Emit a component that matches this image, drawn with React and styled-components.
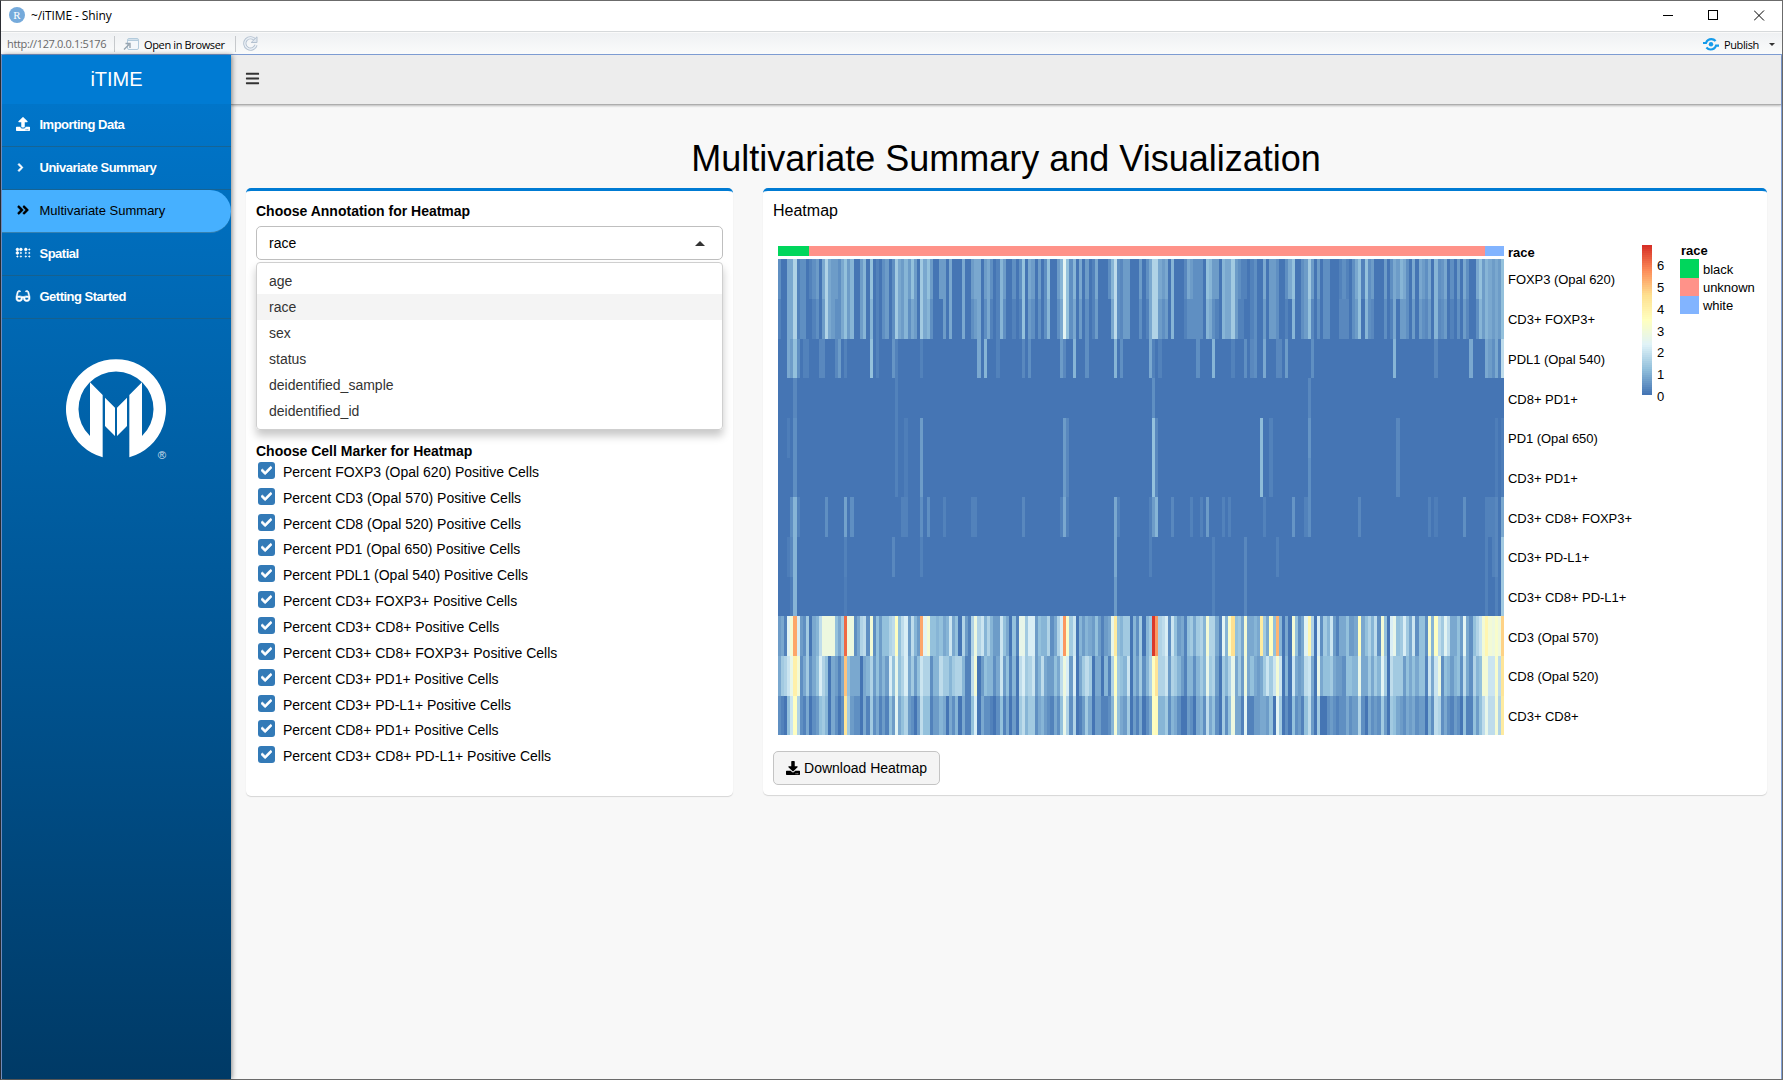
import React from "react";
import styled, { createGlobalStyle } from "styled-components";
import {
  FaUpload,
  FaChevronRight,
  FaAngleDoubleRight,
  FaBraille,
  FaGlasses,
  FaBars,
  FaDownload,
  FaCheck,
} from "react-icons/fa";

const GlobalStyle = createGlobalStyle`
  *, *::before, *::after { box-sizing: border-box; }
  body {
    margin: 0;
    font-family: "Liberation Sans", Arial, sans-serif;
    font-size: 14px;
    color: #000;
    overflow: hidden;
  }
`;

const uiFont = `"Open Sans", "Noto Sans", sans-serif`;

const Window = styled.div`
  width: 1783px;
  height: 1080px;
  display: flex;
  flex-direction: column;
  background: #f8f8f8;
  border: 1px solid #6b6b6b;
  border-left-color: #2b2d33;
`;

const TitleBar = styled.header`
  height: 31px;
  flex: none;
  display: flex;
  align-items: center;
  background: #fff;
  border-bottom: 1px solid #d6d9db;
  padding: 0 0 2px 8px;
  font: 12px ${uiFont};
`;

const RBadge = styled.span`
  width: 16px;
  height: 16px;
  border-radius: 50%;
  background: #75aadb;
  color: #fff;
  font: 11px/16px "Liberation Serif", serif;
  text-align: center;
  margin-right: 6px;
`;

const WindowName = styled.span`
  letter-spacing: -0.1px;
`;

const WindowControls = styled.div`
  margin-left: auto;
  display: flex;
  gap: 35px;
  padding-right: 17px;
`;

const Toolbar = styled.div`
  height: 23px;
  flex: none;
  display: flex;
  align-items: center;
  background: linear-gradient(#eff1f3, #fafbfb);
  border-top: 1px solid #fafafa;
  border-bottom: 1px solid #7f9fd6;
  padding: 0 7px 0 6px;
  font: 11px ${uiFont};
`;

const Address = styled.span`
  width: 100px;
  white-space: nowrap;
  color: #686868;
  letter-spacing: -0.36px;
`;

const Divider = styled.i`
  width: 1px;
  height: 16px;
  margin: 0 7px;
  background: #c6c9cc;
`;

const ToolButton = styled.span`
  display: flex;
  align-items: center;
  gap: 5px;
  padding: 1px 2px 0 1px;
  white-space: nowrap;
  letter-spacing: -0.36px;
  margin-left: ${(p) => (p.$right ? "auto" : 0)};
  padding-right: ${(p) => (p.$right ? 0 : 3)}px;
`;

const Caret = styled.i`
  border: ${(p) => p.$size || 3}px solid transparent;
  border-${(p) => (p.$up ? "bottom" : "top")}: ${(p) => p.$size || 3}px solid #333;
  border-${(p) => (p.$up ? "top" : "bottom")}: 0;
  margin-left: ${(p) => p.$gap || 0}px;
`;

const Frame = styled.div`
  flex: 1;
  min-height: 0;
  display: flex;
  border-left: 1px solid #7f9fd6;
  border-right: 1px solid #7f9fd6;
`;

const Sidebar = styled.aside`
  width: 229px;
  flex: none;
  position: relative;
  z-index: 1;
  display: flex;
  flex-direction: column;
  background: linear-gradient(#007bd3 0, #0075c9 49px, #003a66 100%);
  box-shadow: 1px 0 5px rgba(0, 0, 0, 0.45);
`;

const Brand = styled.div`
  height: 49px;
  background: #007bd3;
  color: #fff;
  font-size: 20px;
  line-height: 48px;
  text-align: center;
`;

const NavItem = styled.a`
  height: 43px;
  display: flex;
  align-items: center;
  padding: 0 0 2px 13.5px;
  font-size: 13px;
  font-weight: ${(p) => (p.$active ? 400 : 700)};
  letter-spacing: ${(p) => (p.$active ? 0 : -0.5)}px;
  color: ${(p) => (p.$active ? "#000" : "#fff")};
  background: ${(p) => (p.$active ? "#46b0ff" : "transparent")};
  border-radius: ${(p) => (p.$active ? "0 21px 21px 0" : "0")};
  border-bottom: 1px solid rgba(40, 90, 110, 0.55);
`;

const NavIcon = styled.span`
  width: 24px;
  display: flex;
  svg {
    height: ${(p) => p.$size || 14}px;
    width: auto;
    overflow: visible;
    stroke: currentColor;
    stroke-width: ${(p) => p.$weight || 0}px;
  }
`;

const LogoBox = styled.div`
  display: flex;
  padding: 40px 0 0 64px;
`;

const Content = styled.main`
  flex: 1;
  min-width: 0;
  display: flex;
  flex-direction: column;
`;

const NavBar = styled.div`
  height: 50px;
  background: #ededed;
  border-bottom: 1px solid #adadad;
  box-shadow: 0 1px 2px rgba(0, 0, 0, 0.25);
  padding: 16px 14px;
  color: #333;
`;

const PageTitle = styled.h1`
  margin: 33px 0 9px;
  font-size: 36px;
  line-height: 41px;
  font-weight: 400;
  text-align: center;
`;

const Columns = styled.div`
  display: flex;
  align-items: flex-start;
  gap: 30px;
  padding: 0 14px 0 15px;
`;

const Card = styled.section`
  width: ${(p) => p.$width}px;
  height: ${(p) => p.$height}px;
  background: #fff;
  border-top: 3px solid #007bd3;
  border-radius: 5px;
  box-shadow: 0 1px 1px rgba(0, 0, 0, 0.14);
  padding: 10px;
`;

const FieldLabel = styled.div`
  font-weight: 700;
  line-height: ${(p) => p.$line || 20}px;
`;

const SelectBox = styled.div`
  height: 34px;
  margin-top: 5px;
  display: flex;
  align-items: center;
  justify-content: space-between;
  border: 1px solid #bfbfbf;
  border-radius: 5px;
  padding: 0 17px 0 12px;
`;

const Menu = styled.ul`
  list-style: none;
  margin: 2px 0 0;
  padding: 5px 0;
  height: 168px;
  border: 1px solid #cfcfcf;
  border-radius: 4px;
  box-shadow: 0 6px 9px rgba(0, 0, 0, 0.22);
`;

const MenuItem = styled.li`
  height: 26px;
  line-height: 27px;
  padding-left: 12px;
  color: #333;
  background: ${(p) => (p.$selected ? "#f4f4f4" : "transparent")};
`;

const MarkerGroup = styled.div`
  margin-top: 13px;
`;

const Marker = styled.label`
  display: flex;
  align-items: center;
  gap: 8px;
  height: 25.85px;
  padding-left: 2px;
`;

const Tick = styled.span`
  width: 17px;
  height: 17px;
  margin-top: -3px;
  border-radius: 3px;
  background: #337ab7;
  display: flex;
  align-items: center;
  justify-content: center;
  svg {
    stroke: #fff;
    stroke-width: 30px;
  }
`;

const CardTitle = styled.h2`
  margin: 0;
  font-size: 16px;
  line-height: 19px;
  font-weight: 400;
`;

const DownloadButton = styled.button`
  width: 167px;
  height: 34px;
  margin-top: 11px;
  display: flex;
  align-items: center;
  justify-content: center;
  gap: 4px;
  border: 1px solid #c4c4c4;
  border-radius: 5px;
  background: #f4f4f4;
  font: 14px "Liberation Sans", Arial, sans-serif;
  color: #000;
  padding: 0;
  white-space: nowrap;
`;

const Plot = styled.svg`
  display: block;
  margin-top: 15px;
`;

const PALETTE = [
  [69, 117, 180],
  [145, 191, 219],
  [224, 243, 248],
  [255, 255, 191],
  [254, 224, 144],
  [252, 141, 89],
  [215, 48, 39],
];

/* Levels run from 0 to 34.5, five per unit of the legend. */
const levelColor = (level) => {
  const t = Math.min(level / 5.75, 5.9999);
  const i = Math.floor(t);
  const mix = PALETTE[i].map((c, k) => Math.round(c + (PALETTE[i + 1][k] - c) * (t - i)));
  return `rgb(${mix.join(",")})`;
};

/* Each block is an origin followed by "start level" runs, in thirds of a pixel. */
const HEAT_ROWS = [
  {
    label: "FOXP3 (Opal 620)",
    runs: [
      [-24, "24 2 33 0 51 4 69 8 81 1 90 2 108 0 117 1 126 2 138 3 147 0 156 4 165 8 174 4 183 3 204 2 213 4 222 6 231 3 240 5 252 0 270 3 279 5 288 0 300 6 309 0 318 1 327 0 336 2 345 3 357 0 366 2 375 7 384 4 393 3 402 5 414 3 423 6 432 3 441 0 450 7 459 4 471 6 480 3 489 0 507 3 528 0 537 4 546 0 576 4 585 0 603 3 612 4 633 0 642 3 651 4 660 2 669 0 678 1 690 5 699 3 708 0"],
      [696, "6 2 18 0 27 2 36 6 45 0 54 4 63 3 75 0 84 3 93 0 102 2 111 6 120 0 141 3 150 5 159 12 168 6 177 2 189 5 198 0 207 4 216 0 225 3 237 0 246 1 255 4 264 0 294 2 303 5 312 9 321 2 330 1.5 339 3 360 0 387 3 396 0 408 2 417 4 426 8 444 4 456 3 465 4 474 0 483 5 492 0 522 1.5 531 4 540 3 549 2 579 0 588 6 597 5 606 3 627 0 636 5 645 4 663 7 675 3 684 2 693 1 711 0 720 1 732 2"],
      [1431, "6 0 24 4 33 0 42 3 63 2 72 0 90 2 99 4 111 6 120 0 138 2 147 3 159 7 168 3 177 0 186 3 195 0 204 2 225 0 252 1 261 2 273 1 282 0 291 2 300 4 309 6 318 1 330 6 339 2 348 3 357 0 387 3 396 0 405 2 414 4 423 3 435 5 444 4 453 2 462 0 471 4 480 0 492 4 501 3 510 2 519 4 528 0 537 5 549 2 558 2.5 567 4 576 0 585 2 597 0 606 3 615 0 624 4 633 2 642 0 663 4 672 6 681 3 690 5 699 4 711 3 720 4 729 3 738 6"],
    ],
  },
  {
    label: "CD3+ FOXP3+",
    runs: [
      [-24, "24 1 33 0 51 4 69 8 81 1 90 2 108 0 126 1 138 2 147 0 156 3 165 8 174 4 183 3 195 2 213 4 222 6 231 3 240 5 252 0 270 3 279 5 288 0 300 5 309 0 318 1 327 0 336 2 345 3 357 0 366 2 375 7 384 4 393 3 402 5 414 2 423 4 432 3 441 0 450 7 459 4 471 5 480 2 489 0 519 3 528 0 537 4 546 0 576 4 585 0 603 2 612 3 621 4 633 0 642 2 651 4 660 1 669 0 678 1 690 5 699 2 708 0 726 1 738 0 747 3"],
      [696, "6 1 18 0 27 1 36 6 45 0 54 3 63 2 75 0 84 2 93 0 102 2 111 5 120 0 141 2 150 4 159 12 168 6 177 2 189 4 198 0 207 3 216 0 225 2 237 0 246 1 255 3 264 0 303 4 312 9 321 2 330 1.5 339 3 360 0 387 2 396 0 408 1 417 4 426 8 444 3 456 2 465 3 474 0 483 5 492 0 522 1 531 2 579 0 588 5 597 4 606 2 615 1 627 0 636 5 645 4 663 7 675 3 684 1 702 0 720 1 732 2"],
      [1431, "6 0 24 3 33 0 42 3 63 2 72 0 90 1 99 0 111 5 120 0 138 2 147 3 159 6 168 1.5 177 0 186 2 195 0 204 2 225 0 252 1.5 282 0 291 2 300 3 309 6 318 0 330 5 339 2 348 1.5 357 0 387 2 396 0 405 1 414 4 423 0 435 3 453 2 462 0 471 3 480 0 492 3 501 2 510 1.5 519 3 528 0 537 5 549 1.5 558 2 567 3 576 0 585 1 597 0 606 2 615 0 624 3 633 1.5 642 0 663 2 672 5 681 3 690 5 699 4 711 3 720 4 729 3 738 6"],
    ],
  },
  {
    label: "PDL1 (Opal 540)",
    runs: [
      [-24, "24 0 51 4 60 3 69 6 81 2 90 0 99 1 117 0 147 1.5 165 0 195 1.5 204 3 213 0 222 1 231 0 300 6 309 0 318 1 327 0 366 2.5 375 1 384 0 450 1 459 0 621 4 633 0 642 5 651 0 678 1 690 0"],
      [696, "36 1.5 45 0 54 2 63 0 150 3 159 1.5 168 0 189 5 198 0 225 2 237 0 312 5 321 0 330 2 339 0 417 4 426 1 435 0 444 1 456 0 558 2 570 0 606 5 615 0 663 1 675 0 702 2 711 0 720 1.5 732 2 741 0"],
      [1431, "24 4 33 0 63 1.5 81 0 90 3 99 0 168 2 177 0 414 5 423 0 537 1.5 549 0 642 4 654 0 690 4 699 3 711 2 720 4 729 1 738 9"],
    ],
  },
  {
    label: "CD8+ PD1+",
    runs: [[-24, "24 0 69 1.5 81 0 375 1 384 0"], [696, "426 2 435 0"], [1431, "159 1.5 168 0"]],
  },
  {
    label: "PD1 (Opal 650)",
    runs: [
      [-24, "24 0 51 .7 60 0 69 2 81 0 375 1 384 0 402 .7 414 0 450 3 459 0"],
      [696, "159 3 168 1.5 177 0 426 6 435 1.5 444 0"],
      [1431, "15 5.5 24 0 42 1 54 0 159 2.5 168 0 423 1.5 435 0 720 .7 729 0 738 .7"],
    ],
  },
  {
    label: "CD3+ PD1+",
    runs: [
      [-24, "24 0 69 2 81 0 375 1 384 0 402 .7 414 0 450 3 459 0"],
      [696, "159 3 168 1.5 177 0 426 6 435 1.5 444 0"],
      [1431, "15 5.5 24 0 42 1 54 0 159 2 168 0 423 1.5 435 0 720 .7 729 0 738 .7"],
    ],
  },
  {
    label: "CD3+ CD8+ FOXP3+",
    runs: [
      [-24, "24 0 60 2 69 5 81 1 90 0 165 2 174 0 222 3.5 231 0 240 2 252 0 393 1 414 0 450 2 459 0 471 2 480 0 519 1 528 0 603 1 621 0 756 1.5 765 0 870 1 879 4 888 1 897 0 1032 4 1041 1 1050 0"],
      [1086, "27 1 36 3 45 5 54 0 93 1.5 102 0 150 1 159 0 180 1 189 0 198 3 207 0 246 1 255 0 264 1 273 0 369 1 378 0 456 2.5 465 0 492 1 504 2 513 0 654 1.5 663 0 864 1 873 0 882 .7 894 0 969 2 978 0 1035 1 1065 1.5 1074 0 1083 4"],
    ],
  },
  {
    label: "CD3+ PD-L1+",
    runs: [
      [-24, "24 0 51 .7 60 1.5 69 5 81 0 222 1 231 0 366 1.5 375 0 450 1 459 0 1032 4 1041 0"],
      [1086, "27 1 36 0 216 1 225 0 312 1.5 321 0 408 1 417 0 1035 1 1044 0 1056 1 1065 1.5 1074 0 1083 7"],
    ],
  },
  {
    label: "CD3+ CD8+ PD-L1+",
    runs: [
      [-24, "24 0 60 .7 69 5 81 0 222 .7 231 0 1032 3 1041 0"],
      [1086, "216 1 225 0 312 1.5 321 0 1035 1 1044 0 1065 1 1074 0 1083 7"],
    ],
  },
  {
    label: "CD3 (Opal 570)",
    runs: [
      [-24, "24 3 33 4 42 1 51 12 60 15 69 27 81 11 90 3 99 2 108 7 117 0 126 4 138 5 147 9 156 14 183 14 195 6 204 4 213 7 222 31 231 14 252 2 261 4 270 8 279 9 288 2 300 15 309 2 318 6 327 3 336 6 357 8 366 9 375 17 384 6 393 9 402 11 414 3 423 9 432 5 441 3 450 27 459 12 471 15 480 6 498 5 507 6 519 4 528 5 537 10 546 4 555 6 564 0 576 8 585 3 594 1 603 8 612 14 621 8 633 10 642 5 651 8 660 5 669 3 690 10 699 6 708 4 717 0 726 6 738 1 747 13 765 7 774 11 795 3 804 6 813 5 831 8 840 2 852 4 861 8 870 11 879 28 888 16 897 7 909 10 918 0 927 5 936 3 945 5 954 4 966 3 975 6 984 3 993 1 1002 3 1014 4 1023 13 1032 21 1041 6 1050 5 1059 7 1071 7 1080 0 1089 5 1098 2 1107 7"],
      [1086, "6 0 18 5 27 7 36 34 45 28 54 8 66 9 75 11 84 2 93 10 102 6 111 3 123 4 132 1 141 6 150 7 159 4 168 7 180 8 189 5 198 15 207 8 225 4 237 1 246 12 255 5 264 16 273 23 285 6 294 7 303 4 312 15 321 4 333 4 342 5 351 4 360 21 369 7 378 4 387 17 399 6 408 26 417 5 426 0 435 4 444 0 456 15 465 6 474 2 483 4 492 12 504 19 513 8 522 0 531 11 540 2 549 7 561 5 570 10 579 3 588 1 597 4 618 6 627 3 642 4 654 17 663 4 675 6 684 8 693 5 702 9 711 2 723 15 732 6 741 0 750 11 759 13 768 6 780 7 789 11 798 7 807 4 816 10 825 2 837 6 855 2 864 16 873 5 882 17 894 9 903 7 912 12 921 9 930 4 951 6 960 3 969 12 978 4 987 2 999 6 1008 8 1017 10 1026 15 1035 19 1044 15 1056 14 1065 16 1074 14 1083 24"],
    ],
  },
  {
    label: "CD8 (Opal 520)",
    runs: [
      [-24, "24 4 33 7 42 8 51 10 60 13 69 20 81 15 90 2 99 4 108 7 117 2 126 4 138 6 147 11 156 8 165 6 174 0 183 4 195 3 204 1 213 4 222 25 231 6 240 4 252 4 270 0 279 4 288 5 300 8 309 3 318 6 327 3 336 5 345 3 357 11 366 6 375 13 384 6 393 8 402 11 414 4 423 7 432 3 441 6 450 10 459 8 480 2 489 5 507 9 519 7 537 5 546 7 555 8 576 5 585 1 603 9 612 15 621 0 633 3 642 6 651 5 660 5 669 2 678 4 690 10 699 3 708 6 717 1 726 5 738 0 747 9 756 11 765 7 774 8 786 10 795 3 804 5 813 9 822 4 831 3 852 6 861 4 870 9 879 14 888 11 897 3 909 11 918 0 927 4 936 7 945 9 957 7 966 0 975 4 993 0 1002 5 1014 1 1023 8 1032 17 1041 7 1050 6 1059 5 1071 10 1080 0 1089 5 1098 3 1107 7"],
      [1086, "6 2 18 5 27 8 36 17 45 22 54 8 66 8 75 10 84 3 93 8 102 7 111 5 123 3 132 1 141 5 159 2 168 5 180 7 189 5 198 13 207 7 216 8 225 3 237 0 246 7 255 5 264 8 273 13 285 4 294 7 303 3 312 14 321 4 330 6 342 4 351 3 360 4 369 7 378 10 387 7 399 10 408 15 417 10 426 0 435 5 444 0 456 10 465 4 474 3 483 4 492 9 504 10 513 4 522 0 531 13 540 4 549 6 570 7 579 4 588 3 597 3 606 2 618 6 627 6 636 5 654 13 663 4 684 7 693 4 702 7 711 5 723 12 732 7 741 0 750 9 759 7 768 7 789 3 798 6 807 4 816 6 825 4 837 6 855 1 864 10 873 4 882 10 894 14 903 2 912 6 921 5 930 3 942 5 951 6 960 2 969 9 978 4 987 2 999 8 1008 5 1017 6 1026 15 1044 10 1065 16 1074 9 1083 22"],
    ],
  },
  {
    label: "CD3+ CD8+",
    runs: [
      [-24, "24 2 33 1 42 0 51 6 60 10 69 17 81 8 90 2 99 1 108 4 117 0 126 2 138 3 147 6 156 7 165 5 174 0 183 4 195 2 204 0 213 2 222 22 231 7 240 3 252 2 270 0 279 4 288 1 300 7 309 2 318 4 327 1 336 3 345 1 357 6 366 3 375 12 384 4 393 6 402 8 414 3 423 2 432 0 441 3 450 9 459 6 480 1 489 3 507 5 519 4 528 0 537 4 546 2 555 5 564 0 576 4 585 1 603 6 612 11 621 0 633 4 642 2 651 2 660 1 669 0 678 2 690 6 699 1 708 4 717 0 726 3 738 0 747 7 756 9 765 5 774 7 795 2 804 4 813 5 822 3 831 2 840 1 852 4 861 2 870 6 879 13 888 8 897 2 909 8 918 0 927 1 936 3 945 7 954 4 966 0 975 3 993 1 1014 2 1023 5 1032 15 1041 6 1050 4 1059 3 1071 7 1080 0 1089 3 1098 1 1107 4"],
      [1086, "6 0 18 2 27 4 36 17 45 18 54 5 75 7 84 2 93 5 102 4 111 2 123 0 141 3 150 2 159 0 168 4 180 5 189 2 198 9 207 4 216 6 225 2 237 0 246 7 255 2 264 6 273 14 285 4 303 1 312 12 321 1 342 3 360 4 378 3 387 6 399 0 408 12 417 7 426 0 435 2 444 0 456 6 465 2 474 3 483 1 492 6 504 9 513 3 522 0 531 7 540 0 561 2 570 3 579 2 588 1 597 2 618 4 627 2 636 3 654 8 663 2 675 0 684 4 693 2 702 3 711 2 723 7 732 3 741 0 750 7 759 6 768 4 780 3 789 2 798 4 807 3 816 4 825 2 837 3 855 0 864 5 873 2 882 9 894 8 903 2 912 4 921 2 930 1 942 3 951 2 960 0 969 6 978 1 999 6 1008 3 1017 6 1026 9 1035 13 1044 9 1065 15 1074 8 1083 21"],
    ],
  },
];

const ROW_EDGES = [24, 64, 104, 143, 183, 223, 262, 302, 342, 381, 421, 461, 500];

const toCells = (runs) => {
  const points = runs.flatMap(([origin, text]) => {
    const n = text.split(" ").map(Number);
    const out = [];
    for (let i = 0; i < n.length; i += 2) out.push([(n[i] + origin) / 3, n[i + 1]]);
    return out;
  });
  return points.map(([x, level], i) => ({
    x,
    width: (i + 1 < points.length ? points[i + 1][0] : 726) - x,
    level,
  }));
};

const RACES = [
  ["black", "#00d65c", 24, 19],
  ["unknown", "#ff9289", 43, 18],
  ["white", "#82b4ff", 61, 18],
];

function Heatmap() {
  return (
    <Plot width="984" height="505" viewBox="0 0 984 505" fontSize="13" fontFamily="Liberation Sans, Arial, sans-serif">
      <g shapeRendering="crispEdges">
        <rect x="5" y="11" width="31" height="10" fill="#00d65c" />
        <rect x="36" y="11" width="676" height="10" fill="#ff9289" />
        <rect x="712" y="11" width="19" height="10" fill="#82b4ff" />
        {HEAT_ROWS.map((row, r) =>
          toCells(row.runs).map((c) => (
            <rect
              key={`${r}-${c.x}`}
              x={5 + c.x}
              y={ROW_EDGES[r]}
              width={c.width}
              height={ROW_EDGES[r + 1] - ROW_EDGES[r]}
              fill={levelColor(c.level)}
            />
          ))
        )}
        {Array.from({ length: 75 }, (_, i) => (
          <rect key={i} x="869" y={10 + i * 2} width="10" height="2" fill={levelColor(34.5 * (1 - i / 74))} />
        ))}
        {RACES.map(([name, fill, y, h]) => (
          <rect key={name} x="907" y={y} width="19" height={h} fill={fill} />
        ))}
      </g>
      <text x="735" y="22" fontWeight="700">race</text>
      {HEAT_ROWS.map((row, r) => (
        <text key={row.label} x="735" y={Math.ceil(49 + r * 39.67)} letterSpacing="-0.04">{row.label}</text>
      ))}
      {[0, 1, 2, 3, 4, 5, 6].map((n) => (
        <text key={n} x="884" y={166 - n * 21.8}>{n}</text>
      ))}
      <text x="908" y="20" fontWeight="700">race</text>
      {RACES.map(([name], i) => (
        <text key={name} x="930" y={39 + i * 18} letterSpacing="-0.05">{name}</text>
      ))}
    </Plot>
  );
}

function Logo() {
  return (
    <svg width="104" height="104" viewBox="198 87 312 312" fill="#fff">
      <path d="M308 382A150 150 0 1 1 388 382V195L426 157V318A112.5 112.5 0 1 0 270 318V157L308 195Z" />
      <path d="M315 203L345 233V318L315 288ZM351 233L381 203V288L351 318Z" />
      <text x="473" y="387" fontSize="34" opacity="0.8" fontFamily="Liberation Sans, sans-serif">®</text>
    </svg>
  );
}

const NAV = [
  { label: "Importing Data", icon: FaUpload, size: 14 },
  { label: "Univariate Summary", icon: FaChevronRight, size: 9, weight: 50 },
  { label: "Multivariate Summary", icon: FaAngleDoubleRight, size: 14, weight: 12, active: true },
  { label: "Spatial", icon: FaBraille, size: 14, weight: 28 },
  { label: "Getting Started", icon: FaGlasses, size: 14, weight: 22 },
];

const OPTIONS = ["age", "race", "sex", "status", "deidentified_sample", "deidentified_id"];

const MARKERS = [
  "FOXP3 (Opal 620)",
  "CD3 (Opal 570)",
  "CD8 (Opal 520)",
  "PD1 (Opal 650)",
  "PDL1 (Opal 540)",
  "CD3+ FOXP3+",
  "CD3+ CD8+",
  "CD3+ CD8+ FOXP3+",
  "CD3+ PD1+",
  "CD3+ PD-L1+",
  "CD8+ PD1+",
  "CD3+ CD8+ PD-L1+",
];

export default function App() {
  return (
    <Window>
      <GlobalStyle />
      <TitleBar>
        <RBadge>R</RBadge>
        <WindowName>~/iTIME - Shiny</WindowName>
        <WindowControls>
          <svg width="11" height="11" stroke="#000" shapeRendering="crispEdges"><path d="M1 5.5H11" /></svg>
          <svg width="11" height="11" fill="none" stroke="#000" shapeRendering="crispEdges"><rect x=".5" y=".5" width="9" height="9" /></svg>
          <svg width="11" height="11" stroke="#000"><path d="M0 .5L10 10.5M10 .5L0 10.5" /></svg>
        </WindowControls>
      </TitleBar>
      <Toolbar>
        <Address>http://127.0.0.1:5176</Address>
        <Divider />
        <ToolButton>
          <svg width="16" height="13" viewBox="0 0 16 13" fill="none">
            <rect x="4.5" y=".5" width="11" height="11" rx="1.5" fill="#f4f8fb" stroke="#b3cbdc" />
            <path d="M5 1.5H15V3H5Z" fill="#b3cbdc" />
            <path d="M1 11.5L6 6.5M2.5 5.5H7V10" stroke="#98a5b0" strokeWidth="1.4" />
          </svg>
          Open in Browser
        </ToolButton>
        <Divider />
        <svg width="15" height="15" viewBox="0 0 15 15" fill="none">
          <path d="M12.2 4.2A5.7 5.7 0 1 0 13 9" stroke="#b4c1d0" strokeWidth="3.2" />
          <path d="M12.2 4.2A5.7 5.7 0 1 0 13 9" stroke="#e9eff5" strokeWidth="1.4" />
          <path d="M14 .8V6.5H8.2Z" fill="#dfe7ef" stroke="#b4c1d0" />
        </svg>
        <ToolButton $right>
          <svg width="16" height="13" viewBox="0 0 16 13" fill="none" stroke="#159bea" strokeWidth="2.2">
            <circle cx="8" cy="6.3" r="2.2" fill="#159bea" stroke="none" />
            <path d="M0 5H3C4 2 6 1.1 8.5 1.1C10.5 1.1 11.6 1.9 12.6 3" />
            <path d="M16 7.6H13C12 10.6 10 11.5 7.5 11.5C5.5 11.5 4.4 10.7 3.4 9.6" />
          </svg>
          Publish
          <Caret $gap={5} />
        </ToolButton>
      </Toolbar>
      <Frame>
        <Sidebar>
          <Brand>iTIME</Brand>
          {NAV.map(({ label, icon: Icon, size, weight, active }) => (
            <NavItem key={label} $active={active}>
              <NavIcon $size={size} $weight={weight}><Icon /></NavIcon>
              {label}
            </NavItem>
          ))}
          <LogoBox><Logo /></LogoBox>
        </Sidebar>
        <Content>
          <NavBar><FaBars size={15} /></NavBar>
          <PageTitle>Multivariate Summary and Visualization</PageTitle>
          <Columns>
            <Card $width={487} $height={608}>
              <FieldLabel>Choose Annotation for Heatmap</FieldLabel>
              <SelectBox>
                race
                <Caret $size={5} $up />
              </SelectBox>
              <Menu>
                {OPTIONS.map((o) => (
                  <MenuItem key={o} $selected={o === "race"}>{o}</MenuItem>
                ))}
              </Menu>
              <MarkerGroup>
                <FieldLabel $line={16}>Choose Cell Marker for Heatmap</FieldLabel>
                {MARKERS.map((m) => (
                  <Marker key={m}>
                    <Tick><FaCheck size={11} color="#fff" /></Tick>
                    Percent {m} Positive Cells
                  </Marker>
                ))}
              </MarkerGroup>
            </Card>
            <Card $width={1004} $height={607}>
              <CardTitle>Heatmap</CardTitle>
              <Heatmap />
              <DownloadButton><FaDownload size={14} />Download Heatmap</DownloadButton>
            </Card>
          </Columns>
        </Content>
      </Frame>
    </Window>
  );
}
